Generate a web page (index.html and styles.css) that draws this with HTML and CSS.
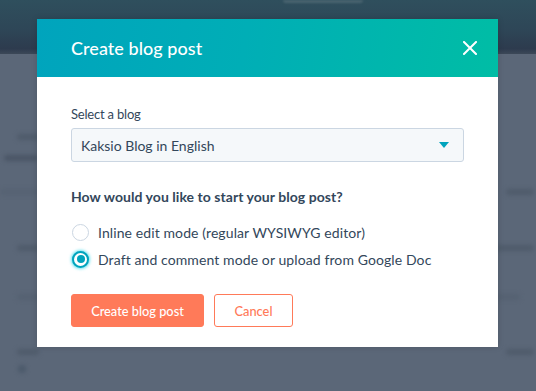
FILE: index.html
```html
<!DOCTYPE html>
<html lang="en">
<head>
<meta charset="utf-8">
<title>Create blog post</title>
<link rel="stylesheet" href="styles.css">
</head>
<body>
<div class="page">
  <div class="topbar"><div class="topbar-pill"></div></div>
  <div class="page-body">
    <div class="ghost-row r0"><span class="ghost g-short"></span><span></span></div>
    <div class="ghost-row r1"><span class="ghost g-long"></span><span></span></div>
    <div class="ghost-row r2"><span class="ghost g-faint"></span><span class="ghost g-right"></span></div>
    <div class="ghost-row r3"><span class="ghost g-short"></span><span class="ghost g-right wide"></span></div>
    <div class="ghost-row r4"><span class="ghost g-short faint"></span><span class="ghost g-right mid"></span></div>
    <div class="ghost-row r5"><span class="ghost g-short"></span><span class="ghost g-right"></span></div>
    <div class="ghost-row r6"><span class="ghost g-dot"></span><span></span></div>
  </div>
</div>

<div class="overlay">
  <div class="modal">
    <div class="modal-header">
      <h1 class="modal-title">Create blog post</h1>
      <button class="close" aria-label="Close">
        <svg width="14" height="14" viewBox="0 0 14 14"><path d="M1 1L13 13M13 1L1 13" stroke="#fff" stroke-width="2" stroke-linecap="square"/></svg>
      </button>
    </div>
    <div class="modal-body">
      <label class="field-label">Select a blog</label>
      <div class="select">
        <span class="select-value">Kaksio Blog in English</span>
        <svg class="caret" width="10" height="6" viewBox="0 0 10 6"><path d="M0 0H10L5 6Z" fill="#00a4bd"/></svg>
      </div>
      <p class="question">How would you like to start your blog post?</p>
      <div class="options">
        <div class="option"><span class="radio"></span><span class="option-text">Inline edit mode (regular WYSIWYG editor)</span></div>
        <div class="option"><span class="radio checked"></span><span class="option-text">Draft and comment mode or upload from Google Doc</span></div>
      </div>
      <div class="actions">
        <button class="btn btn-primary">Create blog post</button>
        <button class="btn btn-secondary">Cancel</button>
      </div>
    </div>
  </div>
</div>
</body>
</html>
```

FILE: styles.css
```css
* { box-sizing: border-box; }
html, body { margin: 0; padding: 0; }
body {
  width: 536px;
  height: 391px;
  overflow: hidden;
  background: #5b6778;
  font-family: "Lato", "Open Sans", sans-serif;
  color: #33475b;
  position: relative;
}
.page { height: 391px; display: flex; flex-direction: column; }
.topbar {
  height: 54px;
  background: linear-gradient(180deg, #2f4f5d 0%, #2e4657 55%, #2d3b4e 90%, #3c4858 100%);
  display: flex;
  justify-content: center;
}
.topbar-pill {
  width: 80px; height: 3px; margin-left: 110px;
  background: #4a6470; border-radius: 0 0 6px 6px; filter: blur(1px);
}
.page-body { flex: 1; display: flex; flex-direction: column; }
.ghost-row { display: flex; justify-content: space-between; height: 6px; flex: none; }
.r0 { margin-top: 80px; }
.r1 { margin-top: 15px; }
.r2 { margin-top: 28px; }
.r3 { margin-top: 50px; }
.r4 { margin-top: 43px; }
.r5 { margin-top: 49px; }
.r6 { margin-top: 10px; }
.ghost { display: block; height: 6px; background: #4f5b6b; border-radius: 3px; filter: blur(2px); }
.g-short { width: 22px; margin-left: 17px; }
.g-short.faint { background: #556172; }
.g-long { width: 34px; margin-left: 4px; background: #4a5566; }
.g-faint { width: 38px; background: #566273; }
.g-right { width: 28px; margin-right: 2px; }
.g-right.wide { width: 38px; }
.g-right.mid { width: 24px; margin-right: 16px; background: #556172; }
.g-dot { width: 8px; height: 8px; border-radius: 50%; margin-left: 18px; background: #4b596a; }

.overlay { position: absolute; left: 0; top: 0; width: 536px; height: 391px; }
.modal {
  position: absolute;
  left: 37px; top: 19px;
  width: 461px; height: 328px;
  background: #fff;
  box-shadow: 0 0 6px rgba(0,0,0,0.15);
  display: flex; flex-direction: column;
}
.modal-header {
  height: 58px;
  flex: none;
  background: linear-gradient(100deg, #00a4bd 0%, #00aeb6 45%, #00bda5 100%);
  display: flex; align-items: center; justify-content: space-between;
  padding: 0 21px 0 34px;
}
.modal-title { margin: 0; font-size: 18px; font-weight: 500; color: #fff; letter-spacing: 0.05px; }
.close { background: none; border: 0; padding: 0; width: 14px; height: 14px; display: flex; margin-top: -1px; }

.modal-body { padding: 27px 34px 0 34px; display: flex; flex-direction: column; }
.field-label { font-size: 13px; line-height: 20px; color: #33475b; letter-spacing: -0.2px; }
.select {
  margin-top: 4px;
  height: 34px;
  background: #f5f8fa;
  border: 1px solid #cbd6e2;
  border-radius: 3px;
  display: flex; align-items: center; justify-content: space-between;
  padding: 0 14px 0 9px;
}
.select-value { font-size: 14px; color: #33475b; }
.caret { display: block; }
.question { margin: 25px 0 0; font-size: 14px; line-height: 20px; font-weight: 700; color: #33475b; letter-spacing: 0.05px; }
.options { margin-top: 15px; display: flex; flex-direction: column; gap: 7px; }
.option { display: flex; align-items: center; height: 20px; }
.radio {
  width: 17px; height: 17px; border-radius: 50%;
  border: 1px solid #cbd6e2; background: #fff;
  margin: 0 9px 0 1px; flex: none;
  display: flex; align-items: center; justify-content: center;
}
.radio.checked {
  border: 2px solid #00a4bd;
  box-shadow: 0 0 3px 1px rgba(0, 208, 228, 0.6);
}
.radio.checked::after { content: ""; width: 8px; height: 8px; border-radius: 50%; background: #00a4bd; }
.option-text { font-size: 14px; color: #33475b; letter-spacing: 0.1px; }
.actions { margin-top: 25px; display: flex; gap: 10px; }
.btn {
  height: 33px; border-radius: 3px; font-family: inherit; font-size: 12.8px; font-weight: 500;
  padding: 0; cursor: pointer;
}
.btn-primary { width: 133px; background: #ff7a59; border: 1px solid #ff7a59; color: #fff; }
.btn-secondary { width: 79px; background: #fff; border: 1px solid #ff7a59; color: #ff7a59; }
```
